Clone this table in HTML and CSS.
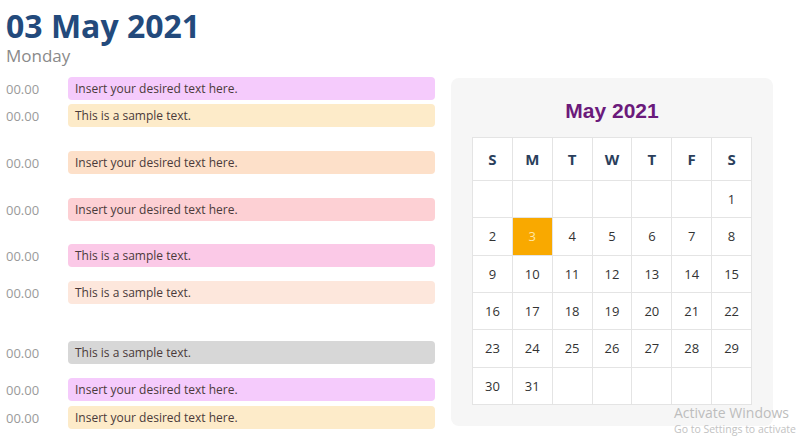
FILE: index.html
```html
<!DOCTYPE html>
<html lang="en">
<head>
<meta charset="utf-8">
<title>03 May 2021</title>
<link rel="stylesheet" href="styles.css">
</head>
<body>
<div class="page">
  <header class="day-header">
    <h1 class="date">03 May 2021</h1>
    <div class="weekday">Monday</div>
  </header>
  <main class="main">
    <section class="schedule">
      <div class="slot"><span class="time">00.00</span><span class="bar c-violet">Insert your desired text here.</span></div>
      <div class="slot gap-s"><span class="time">00.00</span><span class="bar c-cream">This is a sample text.</span></div>
      <div class="slot gap-l"><span class="time">00.00</span><span class="bar c-peach">Insert your desired text here.</span></div>
      <div class="slot gap-l"><span class="time">00.00</span><span class="bar c-rose">Insert your desired text here.</span></div>
      <div class="slot gap-k"><span class="time">00.00</span><span class="bar c-pink">This is a sample text.</span></div>
      <div class="slot gap-m"><span class="time">00.00</span><span class="bar c-blush">This is a sample text.</span></div>
      <div class="slot gap-xl"><span class="time">00.00</span><span class="bar c-grey">This is a sample text.</span></div>
      <div class="slot gap-m"><span class="time">00.00</span><span class="bar c-violet">Insert your desired text here.</span></div>
      <div class="slot gap-t"><span class="time">00.00</span><span class="bar c-cream">Insert your desired text here.</span></div>
    </section>
    <aside class="calendar">
      <h2 class="cal-title">May 2021</h2>
      <div class="cal-grid">
        <div class="cell head">S</div><div class="cell head">M</div><div class="cell head">T</div><div class="cell head">W</div><div class="cell head">T</div><div class="cell head">F</div><div class="cell head">S</div>
        <div class="cell"></div><div class="cell"></div><div class="cell"></div><div class="cell"></div><div class="cell"></div><div class="cell"></div><div class="cell">1</div>
        <div class="cell">2</div><div class="cell today">3</div><div class="cell">4</div><div class="cell">5</div><div class="cell">6</div><div class="cell">7</div><div class="cell">8</div>
        <div class="cell">9</div><div class="cell">10</div><div class="cell">11</div><div class="cell">12</div><div class="cell">13</div><div class="cell">14</div><div class="cell">15</div>
        <div class="cell">16</div><div class="cell">17</div><div class="cell">18</div><div class="cell">19</div><div class="cell">20</div><div class="cell">21</div><div class="cell">22</div>
        <div class="cell">23</div><div class="cell">24</div><div class="cell">25</div><div class="cell">26</div><div class="cell">27</div><div class="cell">28</div><div class="cell">29</div>
        <div class="cell">30</div><div class="cell">31</div><div class="cell"></div><div class="cell"></div><div class="cell"></div><div class="cell"></div><div class="cell"></div>
      </div>
    </aside>
  </main>
</div>
<div class="watermark">
  <div class="wm-title">Activate Windows</div>
  <div class="wm-sub">Go to Settings to activate</div>
</div>
</body>
</html>
```
FILE: styles.css
```css
html, body {
  margin: 0;
  padding: 0;
  background: #ffffff;
  width: 800px;
  height: 446px;
  overflow: hidden;
}
body {
  font-family: "Open Sans", "Noto Sans", sans-serif;
  position: relative;
}
.page {
  padding: 8px 0 0 6px;
}
.date {
  margin: 0;
  font-size: 32px;
  line-height: 36px;
  font-weight: 700;
  color: #234a7c;
}
.weekday {
  margin-top: 2px;
  font-size: 17px;
  line-height: 20px;
  color: #8a8a8a;
}
.main {
  display: flex;
  align-items: flex-start;
  margin-top: 11px;
}
.schedule {
  display: flex;
  flex-direction: column;
  width: 429px;
}
.slot {
  display: flex;
  align-items: center;
  height: 23px;
}
.gap-s { margin-top: 4px; }
.gap-t { margin-top: 5px; }
.gap-m { margin-top: 14px; }
.gap-k { margin-top: 23px; }
.gap-l { margin-top: 24px; }
.gap-xl { margin-top: 37px; }
.time {
  width: 62px;
  font-size: 13px;
  color: #9a9a9a;
}
.bar {
  flex: 1;
  height: 23px;
  line-height: 23px;
  padding-left: 7px;
  border-radius: 4px;
  font-size: 12px;
  color: #4a3a3a;
}
.c-violet { background: #f5cbfc; }
.c-cream { background: #fdebc9; }
.c-peach { background: #fde0c9; }
.c-rose { background: #fdd0d4; }
.c-pink { background: #fbc9e7; }
.c-blush { background: #fde7dc; }
.c-grey { background: #d7d7d7; }

.calendar {
  margin-left: 16px;
  margin-top: 1px;
  padding: 21px;
  background: #f6f6f6;
  border-radius: 8px;
  width: 280px;
}
.cal-title {
  margin: 0 0 14px 0;
  text-align: center;
  font-family: "Liberation Sans", Arial, sans-serif;
  font-size: 21px;
  line-height: 24px;
  font-weight: 700;
  color: #6b1a7b;
}
.cal-grid {
  display: grid;
  grid-template-columns: repeat(7, 1fr);
  grid-template-rows: 42px repeat(6, 1fr);
  gap: 1px;
  padding: 1px;
  height: 266px;
  background: #e4e4e4;
}
.cell {
  background: #ffffff;
  display: flex;
  align-items: center;
  justify-content: center;
  font-size: 13px;
  color: #333333;
}
.cell.head {
  font-size: 15px;
  font-weight: 700;
  color: #2b3f5c;
}
.cell.today {
  background: #f9a900;
  color: #ffe7a6;
}
.watermark {
  position: absolute;
  left: 674px;
  top: 403px;
  white-space: nowrap;
}
.wm-title {
  font-size: 14px;
  line-height: 19px;
  color: #bdbdbd;
}
.wm-sub {
  font-size: 10.5px;
  line-height: 14px;
  color: #c2c2c2;
}
```
